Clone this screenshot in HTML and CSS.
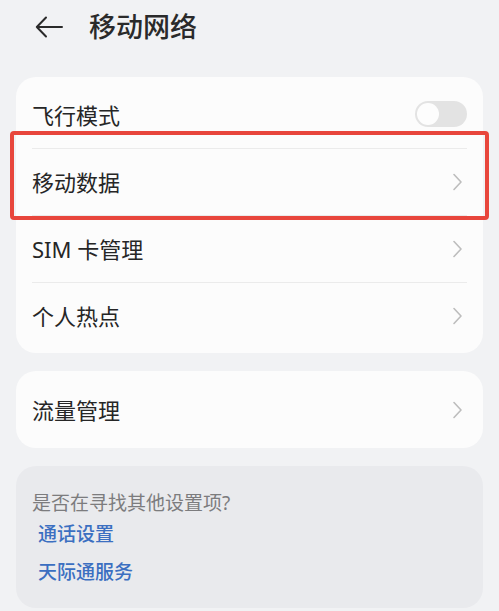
FILE: index.html
```html
<!DOCTYPE html>
<html lang="zh">
<head>
<meta charset="utf-8">
<link rel="stylesheet" href="styles.css">
</head>
<body>
<div class="page">
  <header class="header">
    <svg class="back" width="28" height="22" viewBox="0 0 28 22">
      <path d="M11 1.5 L1.8 11 L11 20.5 M1.8 11 H27" fill="none" stroke="#2a2a2a" stroke-width="2" stroke-linecap="round" stroke-linejoin="round"/>
    </svg>
    <h1 class="title">移动网络</h1>
  </header>

  <section class="card card-main">
    <div class="row">
      <span class="label">飞行模式</span>
      <span class="toggle"><span class="knob"></span></span>
    </div>
    <div class="row">
      <span class="label">移动数据</span>
      <svg class="chev" width="11" height="18" viewBox="0 0 11 18"><path d="M2 1.5 L9 9 L2 16.5" fill="none" stroke="#bdbdbd" stroke-width="1.6" stroke-linecap="round" stroke-linejoin="round"/></svg>
    </div>
    <div class="row">
      <span class="label">SIM 卡管理</span>
      <svg class="chev" width="11" height="18" viewBox="0 0 11 18"><path d="M2 1.5 L9 9 L2 16.5" fill="none" stroke="#bdbdbd" stroke-width="1.6" stroke-linecap="round" stroke-linejoin="round"/></svg>
    </div>
    <div class="row">
      <span class="label">个人热点</span>
      <svg class="chev" width="11" height="18" viewBox="0 0 11 18"><path d="M2 1.5 L9 9 L2 16.5" fill="none" stroke="#bdbdbd" stroke-width="1.6" stroke-linecap="round" stroke-linejoin="round"/></svg>
    </div>
    <div class="highlight"></div>
  </section>

  <section class="card card-single">
    <div class="row">
      <span class="label">流量管理</span>
      <svg class="chev" width="11" height="18" viewBox="0 0 11 18"><path d="M2 1.5 L9 9 L2 16.5" fill="none" stroke="#bdbdbd" stroke-width="1.6" stroke-linecap="round" stroke-linejoin="round"/></svg>
    </div>
  </section>

  <section class="suggest">
    <p class="suggest-title">是否在寻找其他设置项?</p>
    <a class="link">通话设置</a>
    <a class="link">天际通服务</a>
  </section>
</div>
</body>
</html>
```

FILE: styles.css
```css
* { box-sizing: border-box; }
html, body {
  margin: 0;
  padding: 0;
  background: #f1f2f4;
  height: 100%;
  overflow: hidden;
}
body {
  font-family: "Noto Sans", "Noto Sans CJK SC", sans-serif;
  color: #262626;
}
.page {
  padding: 0 16px;
  display: flex;
  flex-direction: column;
}
.header {
  height: 77px;
  display: flex;
  align-items: flex-start;
  padding-top: 8px;
  padding-left: 19px;
  gap: 26px;
}
.back { margin-top: 8px; }
.title {
  margin: 0;
  font-size: 27px;
  font-weight: 500;
  line-height: 38px;
  color: #2a2a2a;
  letter-spacing: 0;
}
.card {
  background: #fcfcfc;
  border-radius: 20px;
  position: relative;
}
.card-main {
  padding: 4px 0 4px;
}
.row {
  height: 67px;
  margin: 0 16px;
  display: flex;
  align-items: center;
  justify-content: space-between;
}
.row + .row { border-top: 1px solid #ebebeb; }
.label {
  font-size: 22px;
  line-height: 28px;
  color: #262626;
}
.chev { margin-right: 4px; }
.toggle {
  width: 52px;
  height: 26px;
  border-radius: 13px;
  background: #e3e3e3;
  display: flex;
  align-items: center;
  padding: 2px;
  margin-top: -2px;
}
.knob {
  width: 22px;
  height: 22px;
  border-radius: 50%;
  background: #fdfdfd;
}
.highlight {
  position: absolute;
  left: -6px;
  top: 54px;
  width: 479px;
  height: 89px;
  border: 4px solid #e8463c;
  border-radius: 4px;
}
.card-single {
  margin-top: 18px;
  padding: 5px 0;
}
.suggest {
  margin-top: 18px;
  background: #e9eaed;
  border-radius: 20px;
  padding: 25px 16px 20px;
  display: flex;
  flex-direction: column;
  height: 142px;
}
.suggest-title {
  margin: 0 0 6px;
  font-size: 19px;
  line-height: 24px;
  color: #7c7c7e;
}
.link {
  font-size: 19px;
  line-height: 26px;
  color: #3b6fc1;
  font-weight: 500;
  padding-left: 6px;
  margin-bottom: 12px;
}
```
